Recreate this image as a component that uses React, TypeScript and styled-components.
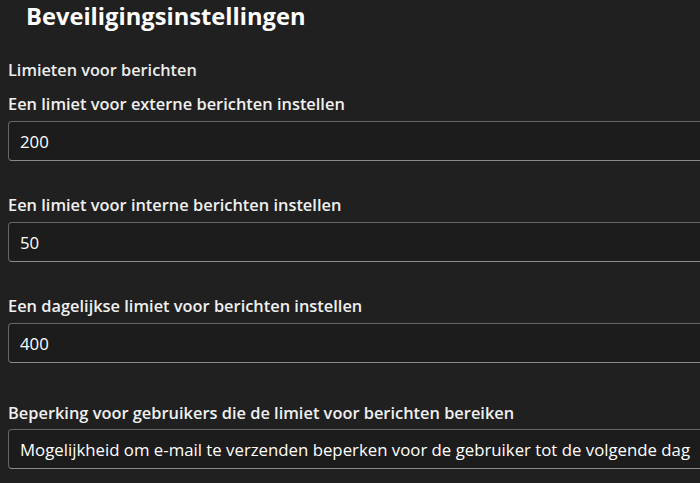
import React from "react";
import styled, { createGlobalStyle } from "styled-components";

const GlobalStyle = createGlobalStyle`
  html, body {
    margin: 0;
    padding: 0;
    background: #202020;
    overflow: hidden;
  }
  body {
    font-family: "Open Sans", "Noto Sans", sans-serif;
    color: #ffffff;
  }
`;

type Limit = { label: string; value: string };

const limits: Limit[] = [
  { label: "Een limiet voor externe berichten instellen", value: "200" },
  { label: "Een limiet voor interne berichten instellen", value: "50" },
  { label: "Een dagelijkse limiet voor berichten instellen", value: "400" },
];

export default function App() {
  return (
    <>
      <GlobalStyle />
      <Page>
        <Title>Beveiligingsinstellingen</Title>
        <Section>
          <SectionTitle>Limieten voor berichten</SectionTitle>
          <Fields>
            {limits.map((l) => (
              <Field key={l.label}>
                <Label>{l.label}</Label>
                <Input defaultValue={l.value} />
              </Field>
            ))}
            <Field $extra>
              <Label>Beperking voor gebruikers die de limiet voor berichten bereiken</Label>
              <Input defaultValue="Mogelijkheid om e-mail te verzenden beperken voor de gebruiker tot de volgende dag" />
            </Field>
          </Fields>
        </Section>
      </Page>
    </>
  );
}

const Page = styled.div`
  width: 720px;
  height: 483px;
  padding: 0 0 0 8px;
  box-sizing: border-box;
  background: #202020;
`;

const Title = styled.h1`
  margin: 0 0 0 18px;
  padding-top: 1px;
  font-size: 23.7px;
  line-height: 31px;
  font-weight: 700;
  color: #ffffff;
`;

const Section = styled.div`
  display: flex;
  flex-direction: column;
  gap: 13px;
  margin-top: 27px;
`;

const SectionTitle = styled.div`
  font-size: 16.3px;
  line-height: 22px;
  font-weight: 600;
  color: #ececec;
`;

const Fields = styled.div`
  display: flex;
  flex-direction: column;
  gap: 34px;
`;

const Field = styled.div<{ $extra?: boolean }>`
  display: flex;
  flex-direction: column;
  gap: ${(p) => (p.$extra ? "6px" : "7px")};
  margin-top: ${(p) => (p.$extra ? "6px" : "0")};
`;

const Label = styled.div`
  font-size: 16.4px;
  line-height: 20px;
  font-weight: 600;
  color: #f0f0f0;
`;

const Input = styled.input`
  box-sizing: border-box;
  width: 100%;
  height: 40px;
  margin: 0;
  padding: 0 11px;
  background: #1c1c1c;
  border: 1px solid #666666;
  border-bottom-color: #8a8a8a;
  border-radius: 4px;
  font-family: "Open Sans", "Noto Sans", sans-serif;
  font-size: 16.8px;
  color: #ffffff;
  outline: none;
`;
